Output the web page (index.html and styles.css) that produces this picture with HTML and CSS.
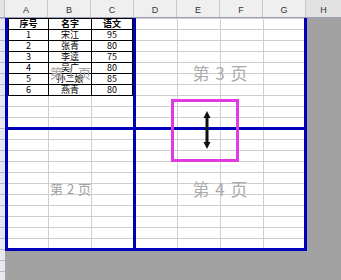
FILE: index.html
```html
<!DOCTYPE html>
<html>
<head>
<meta charset="utf-8">
<link rel="stylesheet" href="styles.css">
</head>
<body>
<div class="app">
  <div class="colhead">
    <div class="corner"></div>
    <div class="ch">A</div>
    <div class="ch">B</div>
    <div class="ch">C</div>
    <div class="ch">D</div>
    <div class="ch">E</div>
    <div class="ch">F</div>
    <div class="ch">G</div>
    <div class="ch last">H</div>
  </div>
  <div class="main">
    <div class="rowhead"></div>
    <div class="canvas">
      <div class="sheet">
        <div class="page p1">
          <div class="data">
            <div class="c b">序号</div><div class="c b">名字</div><div class="c b">语文</div>
            <div class="c">1</div><div class="c">宋江</div><div class="c">95</div>
            <div class="c">2</div><div class="c">张青</div><div class="c">80</div>
            <div class="c">3</div><div class="c">李逵</div><div class="c">75</div>
            <div class="c">4</div><div class="c">吴广</div><div class="c">80</div>
            <div class="c">5</div><div class="c">孙二娘</div><div class="c">85</div>
            <div class="c">6</div><div class="c">燕青</div><div class="c">80</div>
          </div>
          <div class="wm small">第 1 页</div>
        </div>
        <div class="page p3"><div class="wm">第 3 页</div></div>
        <div class="page p2"><div class="wm small">第 2 页</div></div>
        <div class="page p4"><div class="wm">第 4 页</div></div>
      </div>
    </div>
  </div>
  <div class="selbox"></div>
  <svg class="arrow" width="8" height="38" viewBox="0 0 8 38">
    <polygon points="4,0 0.5,7 7.5,7" fill="#111"/>
    <rect x="2.5" y="5" width="3" height="28" fill="#111"/>
    <polygon points="4,38 0.5,31 7.5,31" fill="#111"/>
  </svg>
</div>
</body>
</html>
```
FILE: styles.css
```css
* { box-sizing: border-box; }
html, body { margin: 0; padding: 0; }
body { width: 341px; height: 280px; overflow: hidden; background: #a2a2a2; }
.app { position: relative; width: 341px; height: 280px; font-family: "Liberation Sans", "Noto Sans CJK SC", sans-serif; }
.colhead { display: grid; grid-template-columns: 5px repeat(7, 43px) 1fr; height: 18px; background: #efefef; border-bottom: 1px solid #9c9cc0; }
.corner { background: #e4e4e4; border-right: 1px solid #c4c4c4; }
.ch { display: flex; align-items: flex-end; justify-content: center; padding-bottom: 2px; font-size: 9px; color: #333; border-right: 1px solid #c8c8c8; line-height: 10px; }
.ch.last { background: #e2e2e2; border-right: none; }
.main { display: flex; height: 262px; }
.rowhead { width: 5px; background-color: #e8e8ee; background-image: repeating-linear-gradient(to bottom, #b8b8c8 0 1px, transparent 1px 11px); }
.canvas { flex: 1; background: #a2a2a2; }
.sheet { width: 302px; height: 233px; display: grid; grid-template-columns: 128px 168px; grid-template-rows: 112px 118px; border-left: 3px solid #0000bb; border-right: 3px solid #0000bb; border-bottom: 3px solid #0000bb; background-color: #fff; background-image: repeating-linear-gradient(to right, transparent 0 42px, #cfcfcf 42px 43px), repeating-linear-gradient(to bottom, #cfcfcf 0 1px, transparent 1px 11px); background-position: -2px 0, 0 0; }
.page { display: grid; overflow: hidden; }
.page > * { grid-area: 1 / 1; }
.p1 { border-right: 3px solid #0000bb; border-bottom: 3px solid #0000bb; }
.p3 { border-bottom: 3px solid #0000bb; }
.p2 { border-right: 3px solid #0000bb; }
.data { align-self: start; justify-self: start; display: grid; grid-template-columns: 39px 42px 40px; grid-auto-rows: 10px; gap: 1px; padding: 1px; background: #000; width: 125px; }
.c { background: #fff; display: flex; align-items: center; justify-content: center; font-family: "Noto Sans CJK SC", sans-serif; font-size: 9px; line-height: 10px; color: #000; white-space: nowrap; }
.c.b { font-weight: bold; }
.wm { place-self: center; font-family: "Noto Sans CJK SC", sans-serif; font-size: 17px; color: #acacac; white-space: pre; line-height: 20px; word-spacing: 2px; }
.wm.small { font-size: 13px; color: #a0a0a0; line-height: 16px; word-spacing: 1px; }
.selbox { position: absolute; left: 171px; top: 99px; width: 68px; height: 63px; border: 3px solid #e03ae0; }
.arrow { position: absolute; left: 203px; top: 111px; }
```
